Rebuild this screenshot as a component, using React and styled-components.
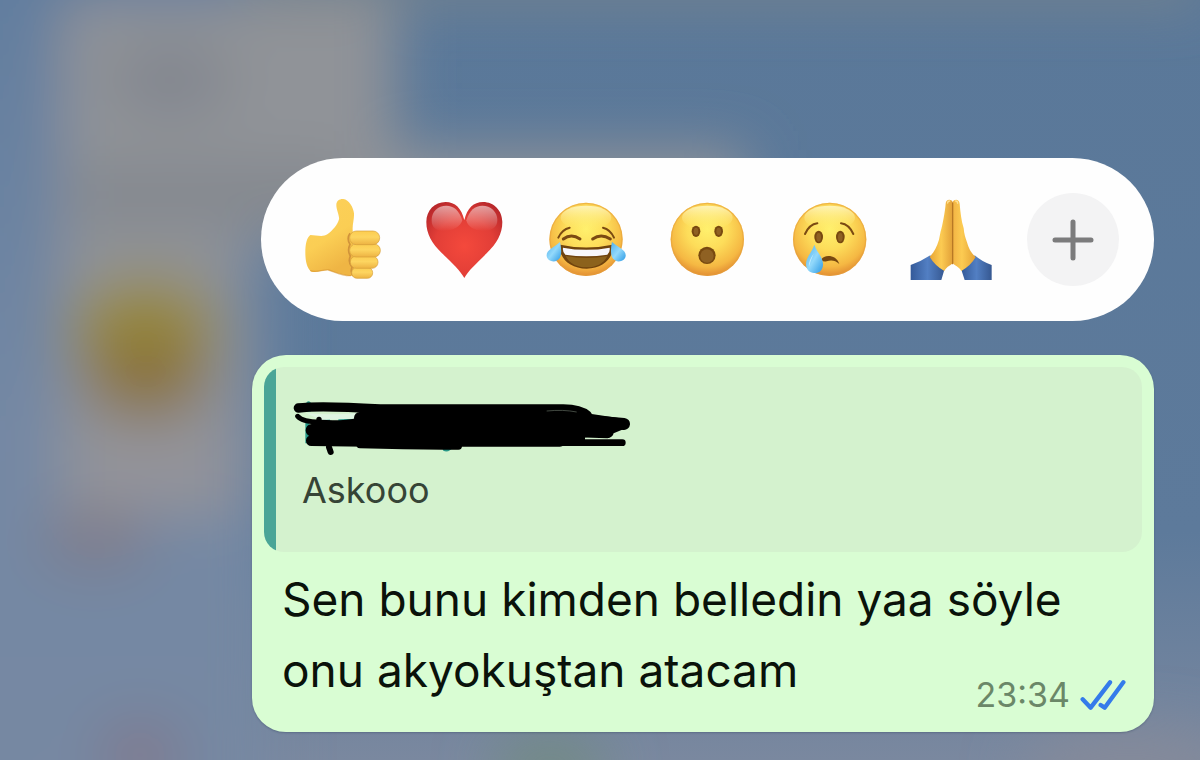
import React, { useState } from 'react'
import styled, { createGlobalStyle } from 'styled-components';


const GlobalStyle = createGlobalStyle`
    * { box-sizing: border-box; }
    body {
        margin: 0;
        font-family: Inter, 'Noto Sans', sans-serif;
        background: #5a7899;
    }
`

const Page = styled.main`
    position: relative;
    min-height: 100vh;
    overflow: hidden;
    padding: 158px 46px 28px 21%;
`
const Wallpaper = styled.svg`
    position: absolute;
    top: 0;
    left: 0;
    width: 100%;
    height: 100%;
`
const Stack = styled.div`
    position: relative;
    display: flex;
    flex-direction: column;
    gap: 34px;
`

const Picker = styled.div`
    display: flex;
    align-items: center;
    justify-content: space-between;
    margin-left: 9px;
    padding: 35px;
    border-radius: 82px;
    background: #fefefe;
`
const PickerButton = styled.button`
    display: flex;
    align-items: center;
    justify-content: center;
    width: 92px;
    height: 93px;
    padding: 0;
    border: none;
    border-radius: 50%;
    background: ${(props) => (props.$filled ? '#f3f3f4' : 'transparent')};
    cursor: pointer;
`
const Emoji = styled.svg`
    width: 92px;
    height: 92px;
`
const PlusIcon = styled.svg`
    width: 42px;
    height: 42px;
`

const Bubble = styled.article`
    padding: 12px;
    border-radius: 34px;
    background: #d9fdd3;
    box-shadow: 0 1px 2px rgba(30, 50, 80, 0.3);
`
const Quote = styled.blockquote`
    margin: 0;
    padding: 30px 16px 36px 28px;
    border-radius: 20px;
    background: linear-gradient(to right, #4aa597 12px, #d4f2ce 12px);
`
const Scribble = styled.svg`
    display: block;
    width: 340px;
    height: 60px;
`
const QuoteText = styled.p`
    margin: 0;
    padding: 8px 10px 0;
    font-size: 36px;
    line-height: 51px;
    color: #364436;
`
const Message = styled.div`
    display: flow-root;
    padding: 12px 16px 14px 18px;
    font-size: 46px;
    line-height: 71px;
    color: #0a120a;
`
const Meta = styled.span`
    float: right;
    display: flex;
    align-items: center;
    gap: 10px;
    margin-top: 44px;
    height: 32px;
    margin-bottom: -5px;
`
const Time = styled.time`
    font-size: 34px;
    line-height: 32px;
    color: #6b8768;
`
const Ticks = styled.svg`
    width: 46px;
    height: 32px;
`


// the blurred chat behind the open menu
function Backdrop() {
    return (
        <Wallpaper viewBox="0 0 1200 760" preserveAspectRatio="none" aria-hidden="true">
            <defs>
                <linearGradient id="base" x1="0" y1="0" x2="0" y2="1">
                    <stop offset="0" stopColor="#5a7899" />
                    <stop offset="0.7" stopColor="#5d7a9b" />
                    <stop offset="1" stopColor="#7a889f" />
                </linearGradient>
                <linearGradient id="edge" x1="0" y1="0" x2="0" y2="1">
                    <stop offset="0" stopColor="#5f7c9e" />
                    <stop offset="0.55" stopColor="#7488a4" />
                    <stop offset="1" stopColor="#7788a2" />
                </linearGradient>
                <filter id="soft" x="-50%" y="-50%" width="200%" height="200%">
                    <feGaussianBlur stdDeviation="28" />
                </filter>
            </defs>
            <rect width="1200" height="760" fill="url(#base)" />
            <g filter="url(#soft)">
                <rect x="-80" y="-80" width="350" height="920" fill="url(#edge)" />
                <path d="M60 0H395V150H745V240H240V515H60Z" fill="#909398" />
                <ellipse cx="170" cy="80" rx="60" ry="35" fill="#82868e" />
                <rect x="75" y="165" width="270" height="60" fill="#84888e" />
                <rect x="75" y="430" width="150" height="85" fill="#93939a" />
                <ellipse cx="145" cy="332" rx="74" ry="54" fill="#968a3c" />
                <ellipse cx="146" cy="376" rx="60" ry="42" fill="#8b733c" />
                <ellipse cx="95" cy="540" rx="55" ry="30" fill="#7e7d8c" />
                <ellipse cx="140" cy="755" rx="40" ry="35" fill="#80798d" />
                <ellipse cx="550" cy="765" rx="60" ry="24" fill="#6f8b7c" />
                <ellipse cx="1130" cy="770" rx="110" ry="40" fill="#858a9a" />
                <rect x="240" y="-30" width="960" height="30" fill="#7c858b" />
            </g>
        </Wallpaper>
    )
}

function ThumbsUp() {
    return (
        <Emoji viewBox="18 27 276 276" aria-hidden="true">
            <defs>
                <linearGradient id="hand" x1="0" y1="0" x2="0.4" y2="1">
                    <stop offset="0" stopColor="#fcd05a" />
                    <stop offset="0.6" stopColor="#fbce54" />
                    <stop offset="1" stopColor="#efb544" />
                </linearGradient>
                <linearGradient id="finger" x1="0" y1="0" x2="0" y2="1">
                    <stop offset="0" stopColor="#fccd50" />
                    <stop offset="0.45" stopColor="#fdd560" />
                    <stop offset="1" stopColor="#edb343" />
                </linearGradient>
            </defs>
            <path d="M61 150C78 150 98 158 112 148C129 136 143 118 147 103C149 93 139 75 139 60C139 47 149 41 160 42C177 44 190 67 192 85C193 103 187 117 188 134L193 262C193 274 181 275 168 271C150 268 131 260 113 255C97 256 81 263 64 260C50 249 46 225 46 203C46 178 50 158 61 150Z" fill="url(#hand)" />
            <path d="M62 257C80 264 99 253 116 255C137 262 158 273 181 272" fill="none" stroke="#d99630" strokeWidth="4" strokeLinecap="round" opacity="0.6" />
            <path d="M180 145Q169 161 180 178Q171 196 181 213Q173 231 186 247Q180 263 190 273" fill="none" stroke="#d1933a" strokeWidth="5" />
            <g fill="url(#finger)" stroke="#d79e3a" strokeWidth="2">
                <rect x="185" y="247" width="63" height="33" rx="16" />
                <rect x="181" y="213" width="83" height="37" rx="18" />
                <rect x="179" y="177" width="92" height="39" rx="19" />
                <rect x="179" y="138" width="90" height="41" rx="20" />
            </g>
        </Emoji>
    )
}

function Heart() {
    return (
        <Emoji viewBox="23 27 276 276" aria-hidden="true">
            <defs>
                <radialGradient id="red" cx="0.5" cy="0.58" r="0.65">
                    <stop offset="0" stopColor="#f4493c" />
                    <stop offset="0.6" stopColor="#e23e37" />
                    <stop offset="1" stopColor="#b9282b" />
                </radialGradient>
                <linearGradient id="shine" x1="0" y1="0" x2="0" y2="1">
                    <stop offset="0" stopColor="#fff" stopOpacity="0.55" />
                    <stop offset="1" stopColor="#fff" stopOpacity="0" />
                </linearGradient>
            </defs>
            <path d="M162 279C151 258 124 233 95 205C65 175 48 147 48 111C48 76 73 51 106 51C134 51 154 70 162 105C170 70 190 51 218 51C251 51 276 77 276 111C276 147 259 175 229 205C200 234 173 258 162 279Z" fill="url(#red)" />
            <path d="M64 105C64 79 83 62 108 62C130 62 147 76 156 106C150 124 130 137 102 138C78 138 63 127 64 105Z" fill="url(#shine)" />
            <path d="M168 106C177 76 194 62 216 62C241 62 261 80 261 105C261 128 243 138 219 138C190 137 172 124 168 106Z" fill="url(#shine)" />
        </Emoji>
    )
}

function FaceFill({ id }) {
    return (
        <>
            <defs>
                <radialGradient id={id} cx="0.5" cy="0.36" r="0.66">
                    <stop offset="0" stopColor="#fff06d" />
                    <stop offset="0.42" stopColor="#fddd5a" />
                    <stop offset="0.78" stopColor="#f5b843" />
                    <stop offset="1" stopColor="#df8630" />
                </radialGradient>
                <linearGradient id={id + 'Top'} x1="0" y1="0" x2="0" y2="1">
                    <stop offset="0" stopColor="#fffbd0" stopOpacity="0.8" />
                    <stop offset="1" stopColor="#ffee70" stopOpacity="0" />
                </linearGradient>
                <linearGradient id={id + 'Drop'} x1="0" y1="0" x2="1" y2="1">
                    <stop offset="0" stopColor="#4eb0ed" />
                    <stop offset="0.5" stopColor="#93d9fb" />
                    <stop offset="1" stopColor="#2a99e5" />
                </linearGradient>
            </defs>
            <circle cx="166" cy="163" r="110" fill={`url(#${id})`} />
            <circle cx="166" cy="163" r="108" fill="none" stroke="#e5a03a" strokeWidth="4" opacity="0.55" />
            <ellipse cx="166" cy="98" rx="76" ry="36" fill={`url(#${id}Top)`} />
        </>
    )
}

function Joy() {
    return (
        <Emoji viewBox="28 27 276 276" aria-hidden="true">
            <FaceFill id="joy" />
            <g fill="none" stroke="#7b4a12" strokeLinecap="round">
                <path d="M83 158Q94 133 117 128M250 158Q239 133 217 128" strokeWidth="6" />
                <path d="M98 162Q122 144 148 162M186 162Q211 144 239 162" strokeWidth="9" />
            </g>
            <path d="M89 179Q166 196 245 179C253 216 217 251 168 251C118 251 82 218 89 179Z" fill="#70430d" />
            <path d="M105 213Q168 225 230 213C219 237 195 247 168 247C141 247 116 237 105 213Z" fill="#8c621c" />
            <path d="M97 188Q167 201 237 188Q239 201 230 209Q167 218 104 209Q95 201 97 188Z" fill="#f8f7fb" />
            <path d="M88 171C92 189 94 209 87 220C77 235 50 231 48 213C46 194 71 187 88 171Z" fill="url(#joyDrop)" />
            <path d="M244 171C240 189 239 209 246 220C256 235 283 231 285 213C287 194 262 187 244 171Z" fill="url(#joyDrop)" />
        </Emoji>
    )
}

function Surprised() {
    return (
        <Emoji viewBox="27 27 276 276" aria-hidden="true">
            <FaceFill id="wow" />
            <g fill="#784910">
                <ellipse cx="132" cy="139" rx="13" ry="17" />
                <ellipse cx="200" cy="139" rx="13" ry="17" />
                <ellipse cx="165" cy="211" rx="26" ry="26" />
            </g>
            <g fill="#8f6123">
                <ellipse cx="132" cy="139" rx="7" ry="11" />
                <ellipse cx="200" cy="139" rx="7" ry="11" />
                <ellipse cx="165" cy="213" rx="20" ry="20" />
            </g>
        </Emoji>
    )
}

function Crying() {
    return (
        <Emoji viewBox="26 27 276 276" aria-hidden="true">
            <FaceFill id="cry" />
            <path d="M92 147Q105 118 129 115M237 147Q224 118 200 115" fill="none" stroke="#7b4a12" strokeWidth="6" strokeLinecap="round" />
            <ellipse cx="133" cy="156" rx="13" ry="19" fill="#784910" />
            <ellipse cx="198" cy="156" rx="13" ry="19" fill="#784910" />
            <ellipse cx="133" cy="157" rx="7" ry="13" fill="#8f6123" />
            <ellipse cx="198" cy="157" rx="7" ry="13" fill="#8f6123" />
            <path d="M141 224C148 209 185 207 195 237C183 226 170 224 157 229Q147 232 141 224Z" fill="#774810" />
            <path d="M120 179C127 201 147 217 146 239C145 256 134 265 120 264C105 264 95 252 95 237C95 217 113 201 120 179Z" fill="url(#cryDrop)" />
            <path d="M118 206Q101 230 104 245Q109 226 118 206Z" fill="#d1f2ff" opacity="0.75" />
        </Emoji>
    )
}

function Pray() {
    return (
        <Emoji viewBox="25 27 276 276" aria-hidden="true">
            <defs>
                <linearGradient id="palmLeft">
                    <stop offset="0" stopColor="#e8a535" />
                    <stop offset="0.5" stopColor="#fccb52" />
                    <stop offset="1" stopColor="#e2a038" />
                </linearGradient>
                <linearGradient id="palmRight">
                    <stop offset="0" stopColor="#f3b444" />
                    <stop offset="0.4" stopColor="#fccb52" />
                    <stop offset="1" stopColor="#e4a236" />
                </linearGradient>
                <linearGradient id="sleeve" x1="0" y1="0" x2="1" y2="0">
                    <stop offset="0" stopColor="#345a99" />
                    <stop offset="0.5" stopColor="#527fc3" />
                    <stop offset="1" stopColor="#365891" />
                </linearGradient>
            </defs>
            <path d="M42 240Q74 229 101 211Q112 233 143 254L134 285H42Z" fill="url(#sleeve)" />
            <path d="M285 240Q257 231 234 211Q222 236 194 254L204 285H285Z" fill="url(#sleeve)" />
            <path d="M147 56C147 42 164 41 168 51V233C164 241 151 242 143 258Q113 240 99 215C112 203 120 186 127 164L132 139C138 119 145 80 147 56Z" fill="url(#palmLeft)" />
            <path d="M168 51C173 41 188 42 189 56C191 80 194 107 201 130C202 147 207 160 211 172C217 192 223 204 237 216Q224 240 194 258C187 244 173 242 168 233Z" fill="url(#palmRight)" />
            <path d="M168 54V236" stroke="#b87824" strokeWidth="4" strokeLinecap="round" />
            <path d="M153 54Q153 48 159 48M177 48Q183 48 183 55" fill="none" stroke="#ffe296" strokeWidth="4" strokeLinecap="round" />
        </Emoji>
    )
}

const reactions = [
    { name: 'Beğen', Icon: ThumbsUp },
    { name: 'Kalp', Icon: Heart },
    { name: 'Kahkaha', Icon: Joy },
    { name: 'Şaşkın', Icon: Surprised },
    { name: 'Üzgün', Icon: Crying },
    { name: 'Dua', Icon: Pray },
]


function App() {
    const [selected, setSelected] = useState(null);

    return (
        <>
            <GlobalStyle />
            <Page>
            <Backdrop />

            <Stack>
            <Picker role="group" aria-label="Tepkiler">
                {reactions.map(({ name, Icon }) => (
                    <PickerButton
                    key={name}
                    type="button"
                    aria-label={name}
                    aria-pressed={selected === name}
                    $filled={selected === name}
                    onClick={() => setSelected(name)}
                    >
                        <Icon />
                    </PickerButton>
                ))}
                <PickerButton type="button" aria-label="Daha fazla" $filled>
                    <PlusIcon viewBox="0 0 42 42" aria-hidden="true">
                        <path d="M21 3V39M3 21H39" stroke="#7b7b7c" strokeWidth="5" strokeLinecap="round" />
                    </PlusIcon>
                </PickerButton>
            </Picker>

            <Bubble>
                <Quote>
                    <Scribble viewBox="36 21 1020 180" aria-hidden="true">
                        <path d="M78 40Q83 30 92 37V65H78ZM76 95H88V160H76ZM125 90Q135 78 150 86V96H125ZM175 86H225V98H175ZM485 170H520Q506 190 490 182Z" fill="#269887" />
                        <path d="M78 70Q150 76 232 70L222 86L125 90Z" fill="#dff5e2" />
                        <g fill="none" stroke="#000" strokeLinecap="round" strokeLinejoin="round">
                            <path d="M55 54C100 48 220 52 300 57H850Q900 58 922 76" strokeWidth="28" />
                            <path d="M53 79Q65 95 120 97Q190 101 235 91" strokeWidth="15" />
                            <path d="M240 84C400 80 650 92 900 91L1032 102" strokeWidth="36" />
                            <path d="M96 121L250 112L800 120L982 126" strokeWidth="38" />
                            <path d="M94 152L260 154H840" strokeWidth="32" />
                            <path d="M240 164Q400 169 535 168" strokeWidth="22" />
                            <path d="M820 158H1027" strokeWidth="20" />
                            <path d="M147 172L152 186" strokeWidth="18" />
                            <path d="M117 88V90" strokeWidth="16" />
                        </g>
                        <path d="M240 60H850L935 72L1030 86V118L990 134L915 142V160H96V108L235 96Z" />
                        <path d="M800 63Q850 58 890 66" fill="none" stroke="#626c60" strokeWidth="2" />
                    </Scribble>
                    <QuoteText>Askooo</QuoteText>
                </Quote>

                <Message>
                    Sen bunu kimden belledin yaa söyle onu akyokuştan atacam
                    <Meta>
                        <Time dateTime="23:34">23:34</Time>
                        <Ticks viewBox="360 52 138 96" role="img" aria-label="Okundu">
                            <path d="M368 113L392 138L450 62M422 130L434 138L490 62" fill="none" stroke="#347bea" strokeWidth="13" strokeLinecap="round" strokeLinejoin="round" />
                        </Ticks>
                    </Meta>
                </Message>
            </Bubble>
            </Stack>
            </Page>
        </>
    )
}

export default App
